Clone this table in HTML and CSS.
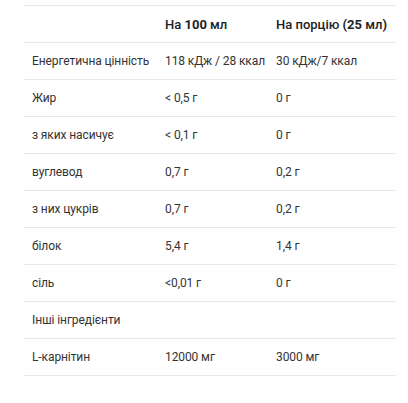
FILE: index.html
```html
<!DOCTYPE html>
<html lang="uk">
<head>
<meta charset="utf-8">
<link rel="stylesheet" href="styles.css">
</head>
<body>
<div class="wrap">
<table class="nutri">
  <thead>
    <tr><th></th><th>На <b>100</b> мл</th><th>На порцію <b>(25</b> мл<b>)</b></th></tr>
  </thead>
  <tbody>
    <tr><td>Енергетична цінність</td><td>118 кДж / 28 ккал</td><td>30 кДж/7 ккал</td></tr>
    <tr><td>Жир</td><td>&lt; 0,5 г</td><td>0 г</td></tr>
    <tr><td>з яких насичує</td><td>&lt; 0,1 г</td><td>0 г</td></tr>
    <tr><td>вуглевод</td><td>0,7 г</td><td>0,2 г</td></tr>
    <tr><td>з них цукрів</td><td>0,7 г</td><td>0,2 г</td></tr>
    <tr><td>білок</td><td>5,4 г</td><td>1,4 г</td></tr>
    <tr><td>сіль</td><td>&lt;0,01 г</td><td>0 г</td></tr>
    <tr><td>Інші інгредієнти</td><td></td><td></td></tr>
    <tr><td>L-карнітин</td><td>12000 мг</td><td>3000 мг</td></tr>
  </tbody>
</table>
</div>
</body>
</html>
```
FILE: styles.css
```css
html, body { margin: 0; padding: 0; background: #fff; }
.wrap { padding: 5px 12px 0 24px; }
.nutri {
  width: 372px;
  border-collapse: collapse;
  table-layout: fixed;
  font-family: Roboto, "Noto Sans", sans-serif;
  font-size: 12px;
  color: #333;
}
.nutri th, .nutri td {
  height: 36px;
  padding: 0 8px;
  text-align: left;
  vertical-align: middle;
  border-top: 1px solid #e8e8e8;
  border-bottom: 1px solid #e8e8e8;
  white-space: nowrap;
}
.nutri td { letter-spacing: -0.1px; }
.nutri th { font-size: 13px; font-weight: 500; color: #222; }
.nutri th b { font-weight: 700; }
.nutri th:nth-child(1), .nutri td:nth-child(1) { width: 117px; }
.nutri th:nth-child(2), .nutri td:nth-child(2) { width: 95px; }
```
